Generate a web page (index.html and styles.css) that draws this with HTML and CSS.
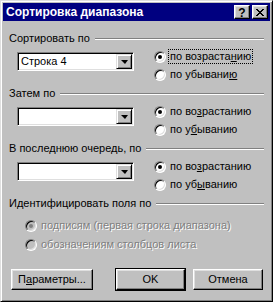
FILE: index.html
```html
<!DOCTYPE html>
<html>
<head>
<meta charset="utf-8">
<link rel="stylesheet" href="styles.css">
</head>
<body>
<div class="window">
  <div class="titlebar">
    <span class="title">Сортировка диапазона</span>
    <div class="tb-buttons">
      <span class="tb-btn help">?</span>
      <span class="tb-btn close"><svg width="8" height="7" viewBox="0 0 8 7"><path d="M0 0h2v1h-2zM6 0h2v1h-2zM1 1h2v1h-2zM5 1h2v1h-2zM2 2h4v1h-4zM3 3h2v1h-2zM2 4h4v1h-4zM1 5h2v1h-2zM5 5h2v1h-2zM0 6h2v1h-2zM6 6h2v1h-2z" fill="#000"/></svg></span>
    </div>
  </div>
  <div class="content">
    <section class="group">
      <div class="group-head"><span class="glabel">Сортировать по</span><span class="rule"></span></div>
      <div class="group-body">
        <div class="combo"><span class="combo-text">Строка 4</span><span class="combo-btn"><span class="tri"></span></span></div>
        <div class="radios">
          <div class="radio"><span class="circle"><span class="dot"></span></span><span class="rtext focus">по возраста<u>н</u>ию</span></div>
          <div class="radio"><span class="circle"></span><span class="rtext">по убывани<u>ю</u></span></div>
        </div>
      </div>
    </section>
    <section class="group">
      <div class="group-head"><span class="glabel">Затем по</span><span class="rule"></span></div>
      <div class="group-body">
        <div class="combo"><span class="combo-text"></span><span class="combo-btn"><span class="tri"></span></span></div>
        <div class="radios">
          <div class="radio"><span class="circle"><span class="dot"></span></span><span class="rtext">по во<u>з</u>растанию</span></div>
          <div class="radio"><span class="circle"></span><span class="rtext">по у<u>б</u>ыванию</span></div>
        </div>
      </div>
    </section>
    <section class="group">
      <div class="group-head"><span class="glabel">В последнюю очередь, по</span><span class="rule"></span></div>
      <div class="group-body">
        <div class="combo"><span class="combo-text"></span><span class="combo-btn"><span class="tri"></span></span></div>
        <div class="radios">
          <div class="radio"><span class="circle"><span class="dot"></span></span><span class="rtext">по во<u>з</u>растанию</span></div>
          <div class="radio"><span class="circle"></span><span class="rtext">по уб<u>ы</u>ванию</span></div>
        </div>
      </div>
    </section>
    <section class="group last">
      <div class="group-head"><span class="glabel">Идентифицировать поля по</span><span class="rule"></span></div>
      <div class="ident">
        <div class="radio disabled"><span class="circle"><span class="dot"></span></span><span class="rtext">подписям (первая строка диапазона)</span></div>
        <div class="radio disabled"><span class="circle"></span><span class="rtext">обозначениям столбцов листа</span></div>
      </div>
    </section>
    <div class="buttons">
      <div class="btn params"><span>П<u>а</u>раметры...</span></div>
      <div class="default-wrap"><div class="btn ok"><span>OK</span></div></div>
      <div class="btn cancel"><span>Отмена</span></div>
    </div>
  </div>
</div>
</body>
</html>
```
FILE: styles.css
```css
* { box-sizing: border-box; }
html, body { margin: 0; padding: 0; background: #c0c0c0; }
body {
  font-family: "Liberation Sans", Arial, sans-serif;
  font-size: 11px;
  line-height: 13px;
  color: #000;
}
.window {
  width: 273px;
  height: 302px;
  background: #c0c0c0;
  border: 1px solid;
  border-color: #dfdfdf #000 #000 #dfdfdf;
  box-shadow: inset 1px 1px #fff, inset -1px -1px #808080;
  padding: 2px;
  display: flex;
  flex-direction: column;
}
.titlebar {
  height: 18px;
  background: #000080;
  display: flex;
  align-items: center;
  padding: 0 2px 0 3px;
}
.title {
  flex: 1;
  color: #fff;
  font-weight: bold;
  font-size: 12px;
  line-height: 16px;
  white-space: nowrap;
}
.tb-buttons { display: flex; gap: 2px; }
.tb-btn {
  width: 16px;
  height: 14px;
  background: #c0c0c0;
  border: 1px solid;
  border-color: #fff #000 #000 #fff;
  box-shadow: inset -1px -1px #808080, inset 1px 1px #dfdfdf;
  display: flex;
  align-items: center;
  justify-content: center;
}
.help {
  font-weight: bold;
  font-size: 12px;
  line-height: 12px;
  padding-top: 1px;
}
.close svg { display: block; }

.content {
  flex: 1;
  padding: 11px 6px 0 6px;
  display: flex;
  flex-direction: column;
}
.group { height: 55px; }
.group.last { height: auto; }
.group-head {
  display: flex;
  align-items: center;
  height: 13px;
}
.glabel { white-space: nowrap; }
.rule {
  flex: 1;
  margin-left: 5px;
  height: 2px;
  border-top: 1px solid #808080;
  border-bottom: 1px solid #fff;
}
.group-body {
  display: flex;
  align-items: flex-start;
  margin-top: 4px;
}
.combo {
  margin-left: 8px;
  margin-top: 3px;
  width: 117px;
  height: 19px;
  background: #fff;
  border: 1px solid;
  border-color: #808080 #fff #fff #808080;
  box-shadow: inset 1px 1px #000, inset -1px -1px #dfdfdf;
  padding: 2px 2px 2px 3px;
  display: flex;
  align-items: center;
}
.combo-text { flex: 1; white-space: nowrap; }
.combo-btn {
  width: 16px;
  height: 15px;
  margin-right: -1px;
  background: #c0c0c0;
  border: 1px solid;
  border-color: #dfdfdf #000 #000 #dfdfdf;
  box-shadow: inset 1px 1px #fff, inset -1px -1px #808080;
  display: flex;
  align-items: center;
  justify-content: center;
}
.tri {
  width: 0;
  height: 0;
  border-left: 4px solid transparent;
  border-right: 3px solid transparent;
  border-top: 4px solid #000;
  margin-left: 1px;
}
.radios {
  margin-left: 20px;
  display: flex;
  flex-direction: column;
  gap: 3px;
}
.radio {
  display: flex;
  align-items: center;
  height: 15px;
  white-space: nowrap;
}
.circle {
  width: 12px;
  height: 12px;
  border-radius: 50%;
  background: #fff;
  border: 1px solid;
  border-color: #808080 #fff #fff #808080;
  box-shadow: inset 1px 1px #000, inset -1px -1px #dfdfdf;
  display: flex;
  align-items: center;
  justify-content: center;
  flex: none;
}
.dot {
  width: 4px;
  height: 4px;
  border-radius: 50%;
  background: #000;
}
.rtext {
  margin-left: 3px;
  padding: 0 1px;
}
.rtext u { text-decoration-thickness: 1px; text-underline-offset: 1px; }
.focus { outline: 1px dotted #000; outline-offset: 0; }
.ident {
  margin-top: 8px;
  margin-left: 16px;
  display: flex;
  flex-direction: column;
  gap: 4px;
}
.radio.disabled .circle { background: #c0c0c0; }
.radio.disabled .dot { background: #808080; }
.radio.disabled .rtext { color: #808080; text-shadow: 1px 1px #fff; }

.buttons {
  display: flex;
  margin-top: 16px;
  align-items: center;
}
.btn {
  height: 21px;
  background: #c0c0c0;
  border: 1px solid;
  border-color: #fff #000 #000 #fff;
  box-shadow: inset -1px -1px #808080, inset 1px 1px #dfdfdf;
  display: flex;
  align-items: center;
  justify-content: center;
  white-space: nowrap;
}
.btn u { text-underline-offset: 1px; }
.params { width: 82px; margin-left: 2px; }
.default-wrap {
  margin-left: 22px;
  border: 1px solid #000;
}
.ok { width: 69px; height: 21px; }
.cancel { width: 70px; margin-left: 7px; }
```
